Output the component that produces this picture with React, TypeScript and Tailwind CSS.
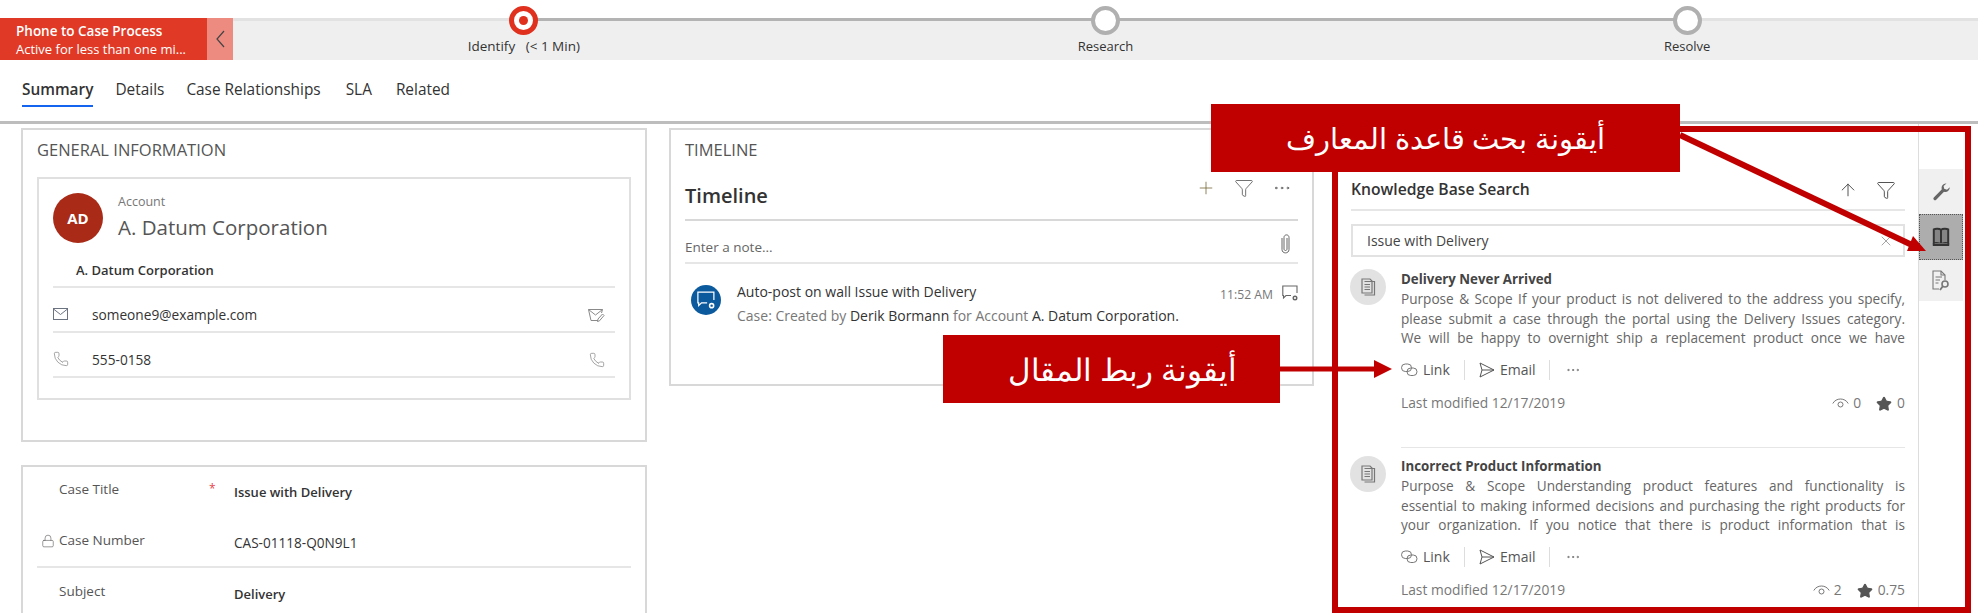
import React from 'react';
import { ArrowUp, Ellipsis, Funnel, Lock, Phone, Plus, Star, X } from 'lucide-react';

const BODY_FONT = "font-['Open_Sans',sans-serif]";

const MailIcon = () => (
  <svg width="15" height="12" viewBox="0 0 15 12" fill="none" stroke="#6b7280" strokeWidth="1">
    <rect x="0.5" y="0.5" width="14" height="11" />
    <path d="M0.5 1 L7.5 6.5 L14.5 1" />
  </svg>
);

const MailEditIcon = () => (
  <svg width="17" height="15" viewBox="0 0 17 15" fill="none" stroke="#8a8a8a" strokeWidth="1">
    <path d="M10 12.5 H3 L0.5 1.5 H14.5 L13.5 5" />
    <path d="M0.5 1.5 L7.5 7 L14.5 1.5" />
    <path d="M9.5 13.5 L10 11 L14.5 6 L16 7.5 L11.5 12.8 Z" />
  </svg>
);

const LinkIcon = () => (
  <svg width="17" height="14" viewBox="0 0 17 14" fill="none" stroke="#777" strokeWidth="1">
    <rect x="0.5" y="1" width="10" height="7.5" rx="3.75" />
    <rect x="6" y="5" width="10" height="7.5" rx="3.75" />
  </svg>
);

const SendIcon = () => (
  <svg width="16" height="16" viewBox="0 0 16 16" fill="none" stroke="#555" strokeWidth="1">
    <path d="M1 1 L15 8 L1 15 L3 8 Z" />
    <path d="M3 8 H15" />
  </svg>
);

const EyeIcon = () => (
  <svg width="17" height="13" viewBox="0 0 17 13" fill="none" stroke="#777" strokeWidth="1">
    <path d="M0.8 6.5 C4 0.5 13 0.5 16.2 6.5" />
    <circle cx="8.5" cy="7.5" r="2.5" />
  </svg>
);

const ArticleGlyph = () => (
  <svg width="15" height="18" viewBox="0 0 15 18" fill="none" stroke="#777" strokeWidth="1.2">
    <path d="M1 1 H9 L11 3 V15 H1 Z" />
    <path d="M3.5 3.5 H13.5 V17 H3.5" />
    <path d="M3.5 6.5 H9 M3.5 9 H9 M3.5 11.5 H9" />
  </svg>
);

const ClipIcon = () => (
  <svg width="9" height="20" viewBox="0 0 9 20" fill="none" stroke="#666" strokeWidth="1">
    <path d="M6 4 V15 C6 17 3 17 3 15 V3.5 C3 0 8 0 8 3.5 V15.5 C8 20 1 20 1 15.5 V4" />
  </svg>
);

const WrenchIcon = () => (
  <svg width="20" height="20" viewBox="0 0 20 20" fill="#666">
    <path d="M15.5 1.5 a4.5 4.5 0 0 0 -4.8 6 L2.8 15.4 a1.7 1.7 0 0 0 2.4 2.4 L13 9.8 a4.5 4.5 0 0 0 5.8 -4.6 l-2.8 2.6 -2.8 -1 -0.6 -2.8 z" />
  </svg>
);

const BookIcon = () => (
  <svg width="18" height="20" viewBox="0 0 20 22" fill="#858585" stroke="#333" strokeWidth="2.2">
    <path d="M10 3 C8 1.5 4 1.5 2 2.5 V18 C4 17.5 8 17.5 10 19 C12 17.5 16 17.5 18 18 V2.5 C16 1.5 12 1.5 10 3 Z" />
    <path d="M10 3 V20" />
    <path d="M2 18 V20 H18 V18" />
  </svg>
);

const KbSearchIcon = () => (
  <svg width="20" height="22" viewBox="0 0 20 22" fill="none" stroke="#777" strokeWidth="1.1">
    <path d="M8 19 H2 V1 H10 L14 5 V10" />
    <path d="M10 1 V5 H14" />
    <path d="M4.5 7 H11 M4.5 10 H9 M4.5 13 H7.5" />
    <circle cx="14" cy="14" r="3" strokeWidth="1.6" />
    <path d="M12 16 L9 20" strokeWidth="1.8" />
  </svg>
);

const PostIcon = ({ stroke, size }: { stroke: string; size: number }) => (
  <svg width={size} height={size} viewBox="0 0 16 16" fill="none" stroke={stroke} strokeWidth="1.1">
    <path d="M9 10.5 H4 L1.5 13 V10.5 H0.8 V1 H15 V8" />
    <circle cx="13" cy="13" r="1.8" strokeWidth="1.4" />
  </svg>
);

const Stage = ({ active, label }: { active?: boolean; label: React.ReactNode }) => (
  <div className="relative flex flex-col items-center">
    {active ? (
      <div className="-mt-[12px] flex h-[29px] w-[29px] items-center justify-center rounded-full border-[5px] border-[#e0301e] bg-white">
        <div className="h-[9px] w-[9px] rounded-full bg-[#e0301e]" />
      </div>
    ) : (
      <div className="-mt-[12px] h-[29px] w-[29px] rounded-full border-[4px] border-[#b0b0b0] bg-white" />
    )}
    <div className="mt-[3px] whitespace-pre text-[13px] leading-[17px] text-[#333]">{label}</div>
  </div>
);

const ContactRow = ({ icon, text, action }: { icon: React.ReactNode; text: string; action: React.ReactNode }) => (
  <div className="flex h-[45px] items-center border-b-2 border-[#e6e6e6] pt-[11px]">
    <div className="-mt-[3px] flex w-[39px] items-center">{icon}</div>
    <div className="flex-1 text-[13.7px] text-[#333]">{text}</div>
    <div className="mr-[10px] flex items-center">{action}</div>
  </div>
);

const FieldRow = ({ label, value, bold, lock, required, h }: { label: string; value: string; bold?: boolean; lock?: boolean; required?: boolean; h: string }) => (
  <div className={`flex items-start ${h}`}>
    <div className="flex w-[21px] justify-end pr-[4px] pt-[3px]">
      {lock && <Lock size={14} strokeWidth={1} className="text-[#555]" />}
    </div>
    <div className="w-[150px] text-[13.5px] leading-[18px] text-[#555]">{label}</div>
    <div className="w-[25px] text-[12px] leading-[18px] text-[#e5484d]">{required ? '*' : ''}</div>
    <div className={`pt-[3px] leading-[18px] text-[#333] ${bold ? 'text-[13px] font-semibold' : 'text-[13.6px]'}`}>{value}</div>
  </div>
);

const Article = ({ title, lines, views, rating }: { title: string; lines: string[]; views: string; rating: string }) => (
  <div className="flex h-[177px]">
    <div className="w-[50px]">
      <div className="-ml-px -mt-px flex h-[36px] w-[36px] items-center justify-center rounded-full bg-[#e2e2e2]">
        <ArticleGlyph />
      </div>
    </div>
    <div className="flex-1">
      <div className="text-[13.3px] font-bold leading-[19px] text-[#444]">{title}</div>
      {lines.map((line) => (
        <div key={line} className="text-justify text-[13.6px] leading-[19.5px] text-[#666] [text-align-last:justify]">{line}</div>
      ))}
      <div className="mt-[12px] flex h-[20px] items-center text-[14px] text-[#555]">
        <LinkIcon />
        <span className="ml-[5px] w-[41px]">Link</span>
        <div className="h-[20px] w-px bg-[#ddd]" />
        <div className="ml-[14px]"><SendIcon /></div>
        <span className="ml-[5px] w-[49px]">Email</span>
        <div className="h-[20px] w-px bg-[#ddd]" />
        <Ellipsis size={16} strokeWidth={1} className="ml-[15px] text-[#555]" />
      </div>
      <div className="mt-[14px] flex h-[20px] items-center justify-between text-[13.8px] text-[#777]">
        <span>Last modified 12/17/2019</span>
        <div className="flex items-center">
          <EyeIcon />
          <span className="ml-[4px]">{views}</span>
          <Star size={16} className="ml-[15px] fill-[#555] text-[#555]" />
          <span className="ml-[5px]">{rating}</span>
        </div>
      </div>
    </div>
  </div>
);

export default function App() {
  return (
    <div className={`relative h-[613px] w-[1978px] overflow-hidden bg-white ${BODY_FONT}`}>
      {/* process bar */}
      <div className="relative mt-[18px] flex h-[42px] bg-[#efefef]">
        <div className="absolute inset-x-0 top-0 h-[3px] bg-[#e2e2e2]" />
        <div className="relative z-10 w-[207px] bg-[#e03a26] pl-[16px] pt-[4px] text-white">
          <div className="text-[13.5px] font-semibold leading-[18px]">Phone to Case Process</div>
          <div className="text-[13px] leading-[18px]">Active for less than one mi...</div>
        </div>
        <div className="relative z-10 flex w-[26px] items-center justify-center bg-[#ee8b80]">
          <svg width="9" height="18" viewBox="0 0 9 18" fill="none" stroke="#444" strokeWidth="1.2">
            <path d="M8 1 L1 9 L8 17" />
          </svg>
        </div>
        <div className="relative grid flex-1 grid-cols-3">
          <div className="absolute inset-x-[291px] top-0 h-[3px] bg-[#b3b3b3]" />
          <Stage active label={<span className="text-[13.5px]">{'Identify   (< 1 Min)'}</span>} />
          <Stage label="Research" />
          <Stage label="Resolve" />
        </div>
      </div>

      {/* tabs */}
      <div className="flex h-[64px] gap-[22px] border-b-[3px] border-[#bdbdbd] pl-[22px] pt-[20px] text-[15.4px] leading-[20px] text-[#333]">
        <div className="h-[27px] border-b-[2px] border-[#1464f0] font-semibold">Summary</div>
        <div>Details</div>
        <div>Case Relationships</div>
        <div className="ml-[3px]">SLA</div>
        <div className="ml-[2px]">Related</div>
      </div>

      <div className="flex">
        {/* left column */}
        <div className="ml-[21px] mt-[4px] w-[626px]">
          <div className="h-[314px] border-2 border-[#d8d8d8] px-[14px]">
            <div className="mt-[10px] text-[16.5px] leading-[20px] text-[#555]">GENERAL INFORMATION</div>
            <div className="mt-[17px] h-[223px] border-2 border-[#e0e0e0] px-[14px] pt-[14px]">
              <div className="flex">
                <div className="flex h-[50px] w-[50px] items-center justify-center rounded-full bg-[#a82a17] text-[15px] font-bold text-white">AD</div>
                <div className="ml-[15px]">
                  <div className="text-[12.5px] leading-[18px] text-[#777]">Account</div>
                  <div className="mt-[2px] text-[20.5px] leading-[28px] text-[#555]">A. Datum Corporation</div>
                </div>
              </div>
              <div className="mt-[18px] h-[27px] border-b-2 border-[#e6e6e6] pl-[23px] text-[13px] font-semibold leading-[18px] text-[#333]">A. Datum Corporation</div>
              <ContactRow icon={<MailIcon />} text="someone9@example.com" action={<MailEditIcon />} />
              <ContactRow icon={<Phone size={16} strokeWidth={1} className="text-[#777]" />} text="555-0158" action={<Phone size={16} strokeWidth={1} className="text-[#777]" />} />
            </div>
          </div>
          <div className="mt-[23px] h-[200px] border-2 border-b-0 border-[#d8d8d8] pt-[13px]">
            <div className="px-[15px]">
              <FieldRow label="Case Title" value="Issue with Delivery" bold required h="h-[51px]" />
              <FieldRow label="Case Number" value="CAS-01118-Q0N9L1" lock h="h-[35px]" />
            </div>
            <div className="mx-[14px] border-t-2 border-[#e6e6e6]" />
            <div className="px-[15px] pt-[14px]">
              <FieldRow label="Subject" value="Delivery" bold h="h-[30px]" />
            </div>
          </div>
        </div>

        {/* timeline */}
        <div className="ml-[22px] mt-[4px] h-[258px] w-[645px] border-2 border-[#d8d8d8] px-[14px]">
          <div className="mt-[10px] text-[16.5px] leading-[20px] text-[#555]">TIMELINE</div>
          <div className="flex h-[61px] items-start justify-between border-b-2 border-[#d8d8d8]">
            <div className="mt-[21px] text-[20px] font-semibold leading-[30px] text-[#333]">Timeline</div>
            <div className="mr-[6px] mt-[18px] flex items-center gap-[18px] text-[#555]">
              <Plus size={20} strokeWidth={1} className="text-[#7a6a3a]" />
              <Funnel size={20} strokeWidth={1} />
              <Ellipsis size={20} strokeWidth={1} />
            </div>
          </div>
          <div className="flex h-[43px] items-center justify-between border-b-2 border-[#e6e6e6] pt-[12px] text-[13.5px] text-[#666]">
            <span>Enter a note...</span>
            <div className="-mt-[7px] mr-[8px]"><ClipIcon /></div>
          </div>
          <div className="mt-[21px] flex">
            <div className="ml-[6px] flex h-[30px] w-[30px] items-center justify-center rounded-full bg-[#0b5a9e]">
              <PostIcon stroke="#fff" size={18} />
            </div>
            <div className="ml-[16px] flex-1">
              <div className="-mt-[3px] text-[14px] leading-[20px] text-[#333]">Auto-post on wall Issue with Delivery</div>
              <div className="mt-[4px] text-[14px] leading-[19px] text-[#777]">
                Case: Created by <span className="text-[#333]">Derik Bormann</span> for Account <span className="text-[#333]">A. Datum Corporation.</span>
              </div>
            </div>
            <div className="flex items-start">
              <span className="text-[12.2px] leading-[20px] text-[#777]">11:52 AM</span>
              <div className="ml-[9px]"><PostIcon stroke="#666" size={16} /></div>
            </div>
          </div>
        </div>

        {/* knowledge base panel */}
        <div className="ml-[37px] w-[554px] pt-[46px]">
          <div className="flex h-[41px] items-center justify-between border-b-2 border-[#e6e6e6]">
            <div className="text-[15.7px] font-semibold text-[#333]">Knowledge Base Search</div>
            <div className="mr-[9px] flex items-center gap-[18px] text-[#444]">
              <ArrowUp size={20} strokeWidth={1.1} />
              <Funnel size={20} strokeWidth={1.1} />
            </div>
          </div>
          <div className="mt-[13px] flex h-[33px] items-center justify-between border-2 border-[#e2e2e2] pl-[14px] pr-[9px] text-[14px] text-[#444]">
            <span>Issue with Delivery</span>
            <X size={16} strokeWidth={1} className="text-[#777]" />
          </div>
          <div className="mt-[13px]">
            <Article
              title="Delivery Never Arrived"
              lines={[
                'Purpose & Scope If your product is not delivered to the address you specify,',
                'please submit a case through the portal using the Delivery Issues category.',
                'We will be happy to overnight ship a replacement product once we have',
              ]}
              views="0"
              rating="0"
            />
            <div className="ml-[50px] h-px bg-[#e6e6e6]" />
            <div className="mt-[9px]">
              <Article
                title="Incorrect Product Information"
                lines={[
                  'Purpose & Scope Understanding product features and functionality is',
                  'essential to making informed decisions and purchasing the right products for',
                  'your organization. If you notice that there is product information that is',
                ]}
                views="2"
                rating="0.75"
              />
            </div>
          </div>
        </div>

        {/* side rail */}
        <div className="ml-[13px] h-[487px] w-[45px] border-l border-[#ddd] pt-[45px]">
          <div className="flex h-[132px] flex-col bg-[#f0f0f0]">
            <div className="flex h-[45px] items-center justify-center">
              <WrenchIcon />
            </div>
            <div className="flex h-[46px] items-center justify-center border border-dotted border-[#555] bg-[#adadad]">
              <BookIcon />
            </div>
            <div className="flex flex-1 items-center justify-center">
              <KbSearchIcon />
            </div>
          </div>
        </div>
      </div>

      {/* red annotations */}
      <div className="pointer-events-none absolute left-[1332px] top-[126px] h-[487px] w-[639px] border-[6px] border-[#c00000]" />
      <svg className="pointer-events-none absolute left-0 top-0" width="1978" height="613">
        <path d="M1680 135 L1912 245" stroke="#c00000" strokeWidth="6" />
        <polygon points="1926,251 1907,251 1913,236" fill="#c00000" />
        <path d="M1280 369 H1376" stroke="#c00000" strokeWidth="5" />
        <polygon points="1392,369 1374,360 1374,378" fill="#c00000" />
      </svg>
      <div dir="rtl" className="absolute left-[1211px] top-[104px] flex h-[68px] w-[469px] items-center justify-center bg-[#c00000] text-[29px] text-white">
        أيقونة بحث قاعدة المعارف
      </div>
      <div dir="rtl" className="absolute left-[943px] top-[335px] flex h-[68px] w-[337px] items-center justify-center bg-[#c00000] pl-[22px] text-[31px] text-white">
        أيقونة ربط المقال
      </div>
    </div>
  );
}
